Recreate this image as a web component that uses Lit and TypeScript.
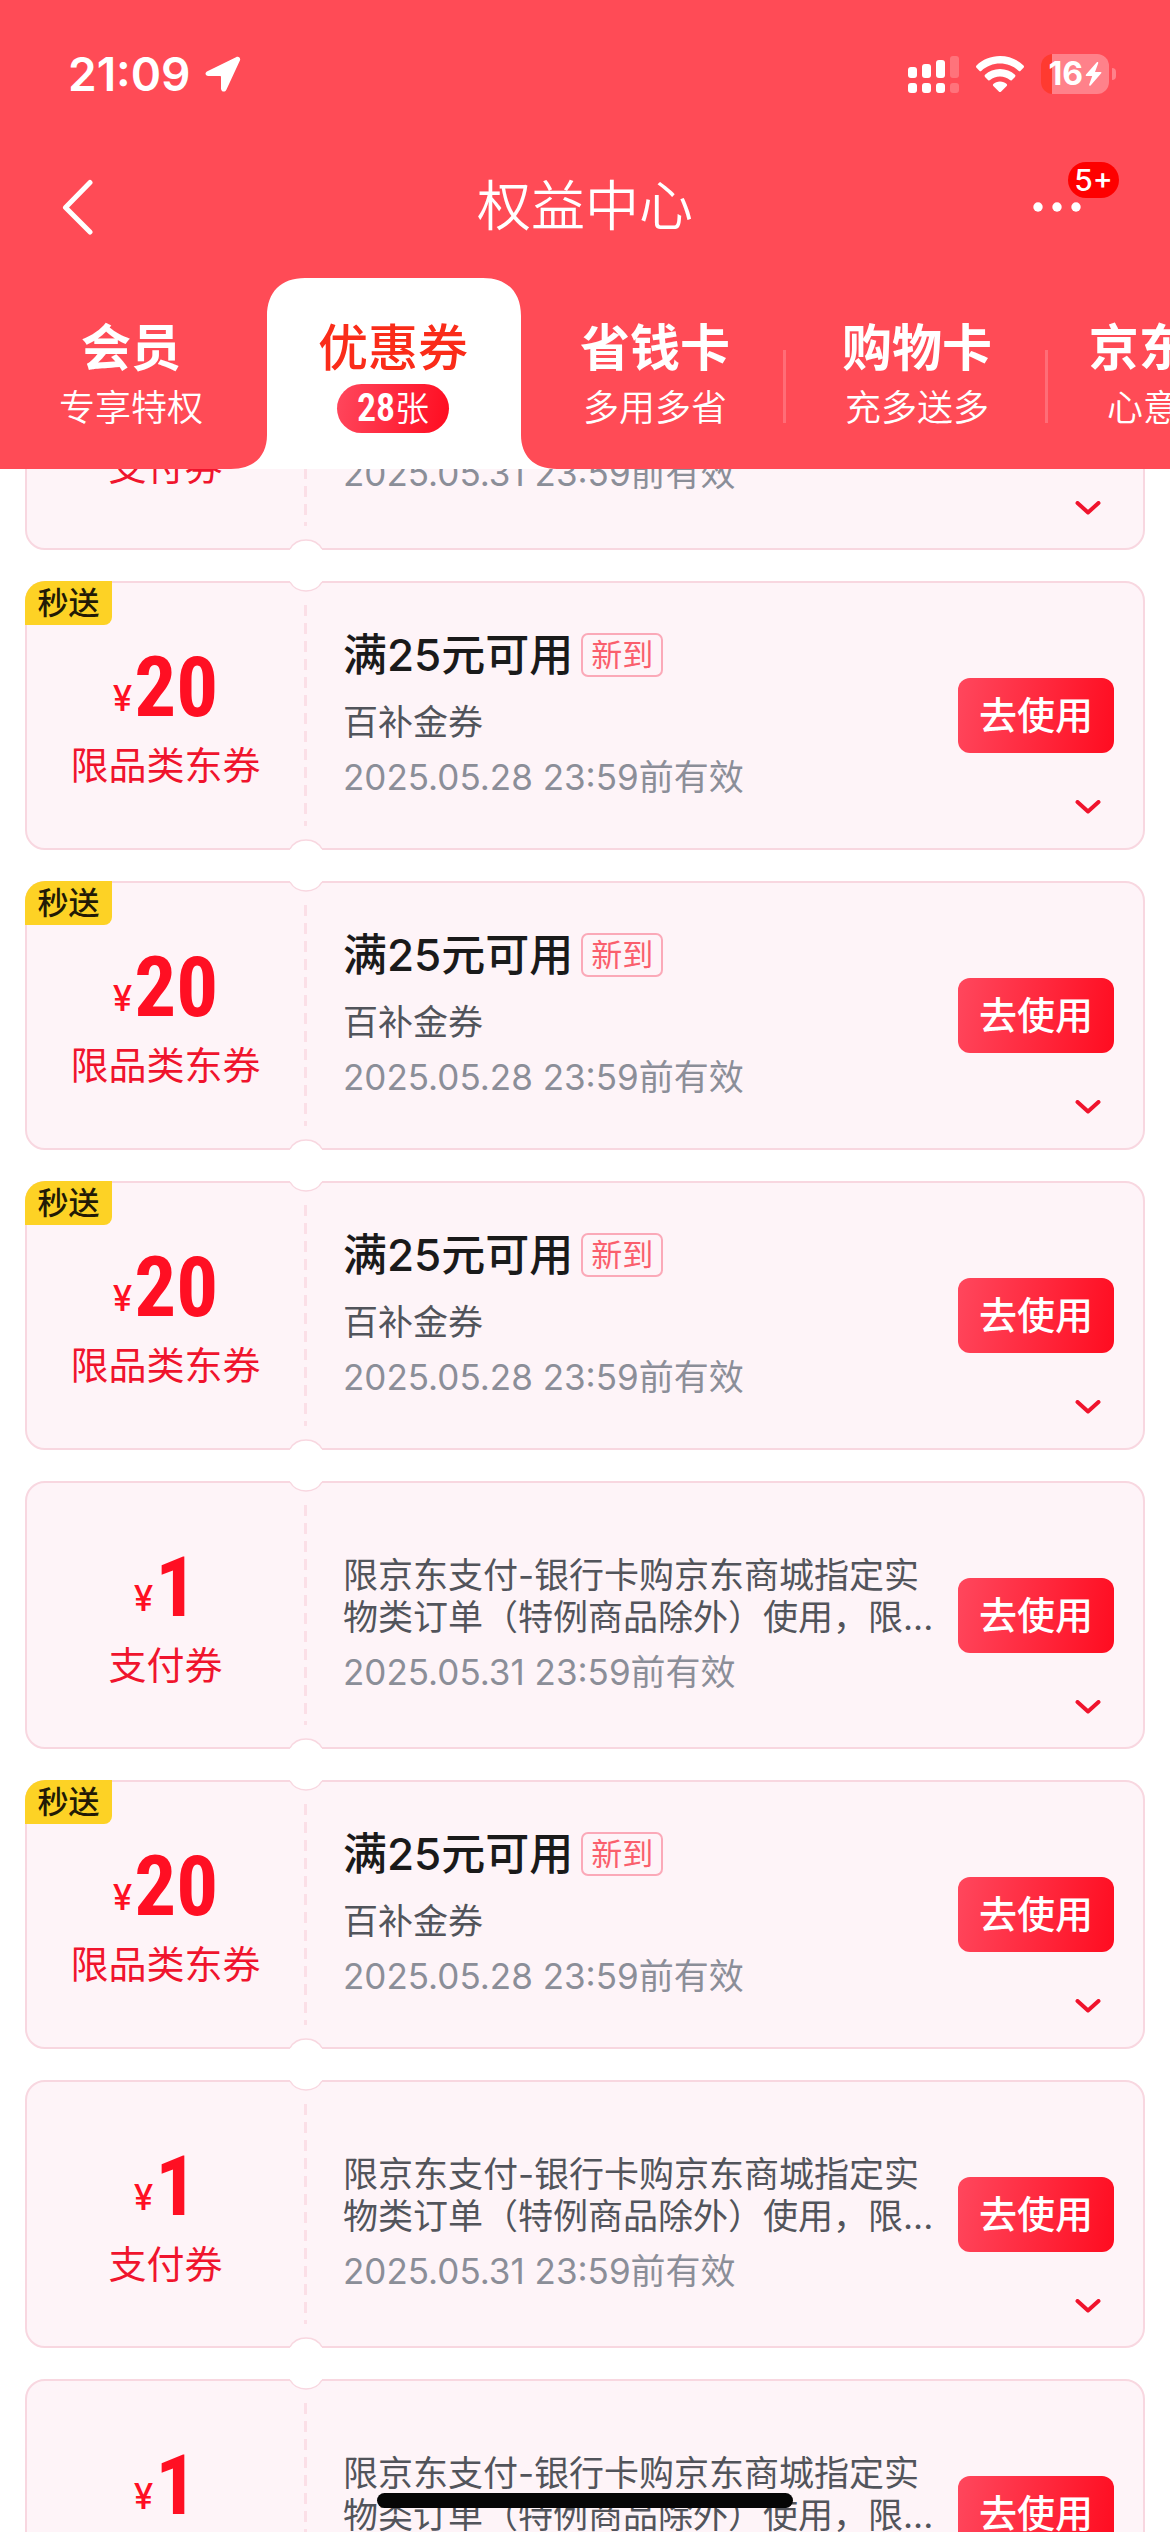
import { LitElement, html, css, svg, nothing } from "lit";
import { customElement, property, state } from "lit/decorators.js";
import { classMap } from "lit/directives/class-map.js";

interface Coupon {
  kind: "instant" | "pay";
  amount: number;
  label: string;
  title?: string;
  desc: string;
  expires: string;
}

interface Tab {
  title: string;
  sub: string;
  count?: number;
}

const instant: Coupon = {
  kind: "instant",
  amount: 20,
  label: "限品类东券",
  title: "满25元可用",
  desc: "百补金券",
  expires: "2025.05.28 23:59前有效",
};

const pay: Coupon = {
  kind: "pay",
  amount: 1,
  label: "支付券",
  desc: "限京东支付-银行卡购京东商城指定实物类订单（特例商品除外）使用，限...",
  expires: "2025.05.31 23:59前有效",
};

const coupons: Coupon[] = [pay, instant, instant, instant, pay, instant, pay, pay];

const tabs: Tab[] = [
  { title: "会员", sub: "专享特权" },
  { title: "优惠券", sub: "张", count: 28 },
  { title: "省钱卡", sub: "多用多省" },
  { title: "购物卡", sub: "充多送多" },
  { title: "京东E卡", sub: "心意好礼" },
];

const signalBars = [11, 14, 18, 22];

@customElement("status-bar")
export class StatusBar extends LitElement {
  static styles = css`
    :host {
      display: flex;
      align-items: center;
      justify-content: space-between;
      height: 148px;
      padding: 0 54px 0 68px;
      color: #fff;
      font-family: Inter, "Noto Sans CJK SC", sans-serif;
    }
    .left,
    .right {
      display: flex;
      align-items: center;
    }
    .left {
      gap: 14px;
    }
    .right {
      gap: 17px;
    }
    .time {
      font-size: 46px;
      line-height: 56px;
      font-weight: 600;
    }
    svg {
      display: block;
    }
    .battery {
      display: flex;
      align-items: center;
      gap: 3px;
    }
    .cell {
      display: flex;
      align-items: center;
      justify-content: flex-end;
      gap: 2px;
      box-sizing: border-box;
      width: 68px;
      height: 40px;
      padding-right: 7px;
      border-radius: 12px;
      background: linear-gradient(90deg, #ff3a30 11px, #ff818a 11px);
      font-size: 32px;
      line-height: 40px;
      font-weight: 700;
    }
    .nub {
      width: 4px;
      height: 12px;
      border-radius: 0 4px 4px 0;
      background: #ff818a;
    }
  `;

  render() {
    return html`
      <div class="left">
        <span class="time">21:09</span>
        <svg width="36" height="36" viewBox="0 0 36 36" aria-hidden="true">
          <path
            d="M31 1.2 2.4 15.2C-.6 16.7.2 20 3.4 20H15.2Q16 20 16 20.8V32.4C16 36 20 36.8 21.5 33.4L34.9 4.6C36 1.8 33.6 0 31 1.2Z"
            fill="#fff"
          />
        </svg>
      </div>
      <div class="right">
        <svg width="51" height="38" viewBox="0 0 51 38" fill="#fff" aria-hidden="true">
          ${signalBars.map(
            (h, i) => svg`
              <g opacity=${i === 3 ? 0.22 : 1}>
                <rect x=${i * 14} y=${23 - h} width="9" height=${h} rx="3" />
                <rect x=${i * 14} y="28" width="9" height="10" rx="3" />
              </g>`
          )}
        </svg>
        <svg width="48" height="36" viewBox="0 0 48 36" fill="#fff" aria-hidden="true">
          <path d="M24 0C33 0 41.500 3.500 47.500 9.500Q48.500 10.700 47.500 11.700L44.600 14.800Q43.600 15.800 42.500 14.800C37.500 10.200 31 7.600 24 7.600S10.500 10.200 5.500 14.800Q4.400 15.800 3.400 14.800L.5 11.700Q-.5 10.700.5 9.500C6.500 3.500 15 0 24 0Z" />
          <path d="M24 13C29.800 13 35 15.200 39 18.800Q40 19.900 39 21L36 24Q35 25 33.900 24.100C31.200 21.900 27.800 20.500 24 20.500S16.800 21.900 14.100 24.100Q13 25 12 24L9 21Q8 19.900 9 18.800C13 15.200 18.200 13 24 13Z" />
          <path d="M24 25.500C26.700 25.500 29 26.400 30.700 27.900Q31.500 28.900 30.700 29.900L25.200 35.400Q24 36.400 22.800 35.400L17.300 29.900Q16.500 28.900 17.300 27.900C19 26.400 21.300 25.500 24 25.500Z" />
        </svg>
        <div class="battery">
          <div class="cell">
            <span>16</span>
            <svg width="17" height="24" viewBox="0 0 17 24" aria-hidden="true">
              <path d="M11.800.3 1 12.600Q.2 14 1.700 14H7.200L4.200 22.600C3.900 23.800 4.800 24.200 5.600 23.400L16.200 11.300Q17 10 15.500 10H10L13.200 1.300C13.500 0 12.500-.4 11.800.3Z" fill="#fff" />
            </svg>
          </div>
          <div class="nub"></div>
        </div>
      </div>
    `;
  }
}

@customElement("coupon-card")
export class CouponCard extends LitElement {
  @property({ attribute: false }) coupon!: Coupon;
  @state() private open = false;

  static styles = css`
    :host {
      display: block;
    }
    .card {
      position: relative;
      display: grid;
      grid-template-columns: 277px minmax(0, 1fr) auto;
      box-sizing: border-box;
      min-height: 269px;
      border: 2px solid #f8d7e0;
      border-radius: 20px;
      background: #fef4f8;
    }
    .card.pay {
      min-height: 268px;
    }
    .notch {
      position: absolute;
      left: 262px;
      display: block;
    }
    .notch.top {
      top: -2px;
    }
    .notch.bottom {
      bottom: -2px;
    }
    .tag {
      position: absolute;
      top: -2px;
      left: -2px;
      width: 87px;
      height: 44px;
      border-radius: 20px 0 8px 0;
      background: #fdd225;
      color: #221a06;
      font-size: 31px;
      line-height: 44px;
      font-weight: 500;
      text-align: center;
    }
    .value {
      position: relative;
      display: flex;
      flex-direction: column;
      align-items: center;
      padding-top: 69px;
      color: #ff0f23;
    }
    .value::after {
      content: "";
      position: absolute;
      right: -3px;
      top: 22px;
      bottom: 22px;
      width: 3px;
      background: repeating-linear-gradient(180deg, #fbdfe7 0 11px, transparent 11px 18px);
    }
    .price {
      display: flex;
      align-items: flex-end;
      gap: 2px;
    }
    .sign {
      font-size: 35px;
      line-height: 52px;
      font-weight: 500;
    }
    .amount {
      font-family: "Roboto Condensed", Roboto, sans-serif;
      font-size: 83px;
      line-height: 72px;
      font-weight: 700;
    }
    .label {
      margin-top: 18px;
      font-size: 38px;
      line-height: 46px;
      color: #f0142d;
    }
    .info {
      display: flex;
      flex-direction: column;
      padding: 46px 20px 0 39px;
    }
    .pay .info {
      padding-top: 71px;
    }
    .head {
      display: flex;
      align-items: center;
      gap: 8px;
      margin-bottom: 20px;
    }
    .title {
      margin: 0;
      font-size: 44px;
      line-height: 52px;
      font-weight: 500;
      color: #1a1a1a;
    }
    .fresh {
      box-sizing: border-box;
      height: 44px;
      padding: 0 8px;
      border: 2px solid #fba9b8;
      border-radius: 7px;
      color: #fa5f6d;
      font-size: 31px;
      line-height: 40px;
    }
    .desc,
    .date {
      margin: 0;
      font-size: 35px;
      line-height: 42px;
    }
    .desc {
      color: #52545b;
    }
    .date {
      margin-top: 13px;
      color: #8b8e98;
    }
    .actions {
      display: flex;
      flex-direction: column;
      align-items: flex-end;
      padding: 95px 29px 0 0;
    }
    button {
      margin: 0;
      padding: 0;
      border: 0;
      background: none;
      font-family: inherit;
      cursor: pointer;
    }
    .use {
      width: 156px;
      height: 75px;
      border-radius: 12px;
      background: linear-gradient(100deg, #ff475d, #ff0c20);
      color: #fff;
      font-size: 38px;
      line-height: 75px;
      font-weight: 500;
    }
    .more {
      display: flex;
      align-items: center;
      justify-content: center;
      width: 52px;
      height: 52px;
      margin-top: 28px;
    }
  `;

  render() {
    const c = this.coupon;
    return html`
      <article class=${classMap({ card: true, pay: c.kind === "pay" })}>
        <div class="value">
          <div class="price">
            <span class="sign">¥</span><span class="amount">${c.amount}</span>
          </div>
          <div class="label">${c.label}</div>
        </div>
        <div class="info">
          ${c.title
            ? html`<div class="head">
                <h2 class="title">${c.title}</h2>
                <span class="fresh">新到</span>
              </div>`
            : nothing}
          <p class="desc">${c.desc}</p>
          <p class="date">${c.expires}</p>
        </div>
        <div class="actions">
          <button class="use" type="button">去使用</button>
          <button
            class="more"
            type="button"
            aria-label="展开详情"
            aria-expanded=${this.open ? "true" : "false"}
            @click=${() => (this.open = !this.open)}
          >
            <svg width="26" height="14" viewBox="0 0 26 14" aria-hidden="true">
              <path d="M2.500 2 13 11.500 23.500 2" fill="none" stroke="#f0142d" stroke-width="4" stroke-linecap="round" stroke-linejoin="round" />
            </svg>
          </button>
        </div>
        ${c.kind === "instant" ? html`<span class="tag">秒送</span>` : nothing}
        <svg class="notch top" width="34" height="11" viewBox="0 0 34 11" aria-hidden="true">
          <path d="M1 0H33V1C30 6.500 24.500 10 17 10S4 6.500 1 1Z" fill="#fff" />
          <path d="M1 1C4 6.500 9.500 10 17 10S30 6.500 33 1" fill="none" stroke="#f8d7e0" stroke-width="1.500" />
        </svg>
        <svg class="notch bottom" width="34" height="11" viewBox="0 0 34 11" aria-hidden="true">
          <path d="M1 11H33V10C30 4.500 24.500 1 17 1S4 4.500 1 10Z" fill="#fff" />
          <path d="M1 10C4 4.500 9.500 1 17 1S30 4.500 33 10" fill="none" stroke="#f8d7e0" stroke-width="1.500" />
        </svg>
      </article>
    `;
  }
}

@customElement("app-root")
export class AppRoot extends LitElement {
  @state() private active = 1;

  static styles = css`
    :host {
      position: relative;
      display: flex;
      flex-direction: column;
      height: 100vh;
      overflow: hidden;
      background: #fff;
      font-family: Inter, "Noto Sans CJK SC", sans-serif;
    }
    header {
      flex: none;
      background: #ff4b56;
      color: #fff;
    }
    button {
      margin: 0;
      padding: 0;
      border: 0;
      background: none;
      color: inherit;
      font-family: inherit;
      cursor: pointer;
    }
    svg {
      display: block;
    }
    .nav {
      display: grid;
      grid-template-columns: 1fr auto 1fr;
      align-items: center;
      height: 118px;
      margin-bottom: 12px;
      padding: 0 50px;
    }
    .back {
      justify-self: start;
      padding-left: 10px;
    }
    .nav h1 {
      margin: 0;
      font-size: 54px;
      line-height: 64px;
      font-weight: 350;
    }
    .menu {
      position: relative;
      justify-self: end;
      width: 88px;
      height: 60px;
      display: flex;
      align-items: center;
    }
    .badge {
      position: absolute;
      top: -15px;
      right: 1px;
      width: 51px;
      height: 36px;
      border-radius: 18px;
      background: #fe0000;
      font-size: 30px;
      line-height: 36px;
      font-weight: 500;
      text-align: center;
    }
    .tabs {
      display: flex;
      height: 191px;
      overflow: hidden;
    }
    .tab {
      position: relative;
      flex: none;
      display: flex;
      flex-direction: column;
      align-items: center;
      box-sizing: border-box;
      width: 262px;
      padding-top: 40px;
    }
    .tab.split::after {
      content: "";
      position: absolute;
      right: 0;
      top: 72px;
      width: 3px;
      height: 73px;
      background: #ff6d77;
    }
    .name {
      position: relative;
      font-size: 50px;
      line-height: 60px;
      font-weight: 600;
    }
    .sub {
      margin-top: 8px;
      font-size: 36px;
      line-height: 44px;
      font-weight: 350;
    }
    .shape {
      position: absolute;
      top: 0;
      left: -31px;
    }
    .active .name {
      color: #fa2c19;
      font-weight: 500;
    }
    .pill {
      position: relative;
      display: flex;
      align-items: center;
      justify-content: center;
      width: 112px;
      height: 49px;
      margin-top: 6px;
      border-radius: 25px;
      background: linear-gradient(100deg, #ff475d, #ff0c20);
      font-size: 34px;
      line-height: 49px;
      font-weight: 350;
    }
    .count {
      font-family: "Roboto Condensed", Roboto, sans-serif;
      font-size: 38px;
      font-weight: 600;
    }
    main {
      flex: 1;
      min-height: 0;
      overflow: hidden;
    }
    .list {
      display: flex;
      flex-direction: column;
      gap: 31px;
      margin: -187px 25px 0;
      padding: 0;
      list-style: none;
    }
    .home {
      position: absolute;
      left: 50%;
      bottom: 24px;
      width: 416px;
      height: 15px;
      margin-left: -208px;
      border-radius: 8px;
      background: #060606;
    }
  `;

  private renderTab(tab: Tab, i: number) {
    const active = i === this.active;
    const split = !active && i + 1 !== this.active && i > 1;
    return html`
      <button
        type="button"
        role="tab"
        aria-selected=${active ? "true" : "false"}
        class=${classMap({ tab: true, active, split })}
        @click=${() => (this.active = i)}
      >
        ${active
          ? html`<svg class="shape" width="326" height="191" viewBox="0 0 326 191" aria-hidden="true">
              <path d="M0 191C24 191 36 177 36 157V38C36 14 50 0 74 0H252C276 0 290 14 290 38V157C290 177 302 191 326 191Z" fill="#fff" />
            </svg>`
          : nothing}
        <span class="name">${tab.title}</span>
        ${tab.count
          ? html`<span class="pill"><span class="count">${tab.count}</span>${tab.sub}</span>`
          : html`<span class="sub">${tab.sub}</span>`}
      </button>
    `;
  }

  render() {
    return html`
      <header>
        <status-bar></status-bar>
        <nav class="nav">
          <button class="back" type="button" aria-label="返回">
            <svg width="34" height="56" viewBox="0 0 34 56" aria-hidden="true">
              <path d="M30 3.500 5.500 28.500 30 53" fill="none" stroke="#fff" stroke-width="5" stroke-linecap="round" stroke-linejoin="round" />
            </svg>
          </button>
          <h1>权益中心</h1>
          <button class="menu" type="button" aria-label="更多">
            <svg width="50" height="10" viewBox="0 0 50 10" fill="#fff" aria-hidden="true">
              <circle cx="6" cy="5" r="4.700" />
              <circle cx="25" cy="5" r="4.700" />
              <circle cx="44" cy="5" r="4.700" />
            </svg>
            <span class="badge">5+</span>
          </button>
        </nav>
        <div class="tabs" role="tablist">${tabs.map((t, i) => this.renderTab(t, i))}</div>
      </header>
      <main>
        <ul class="list">
          ${coupons.map((c) => html`<li><coupon-card .coupon=${c}></coupon-card></li>`)}
        </ul>
      </main>
      <div class="home"></div>
    `;
  }
}
